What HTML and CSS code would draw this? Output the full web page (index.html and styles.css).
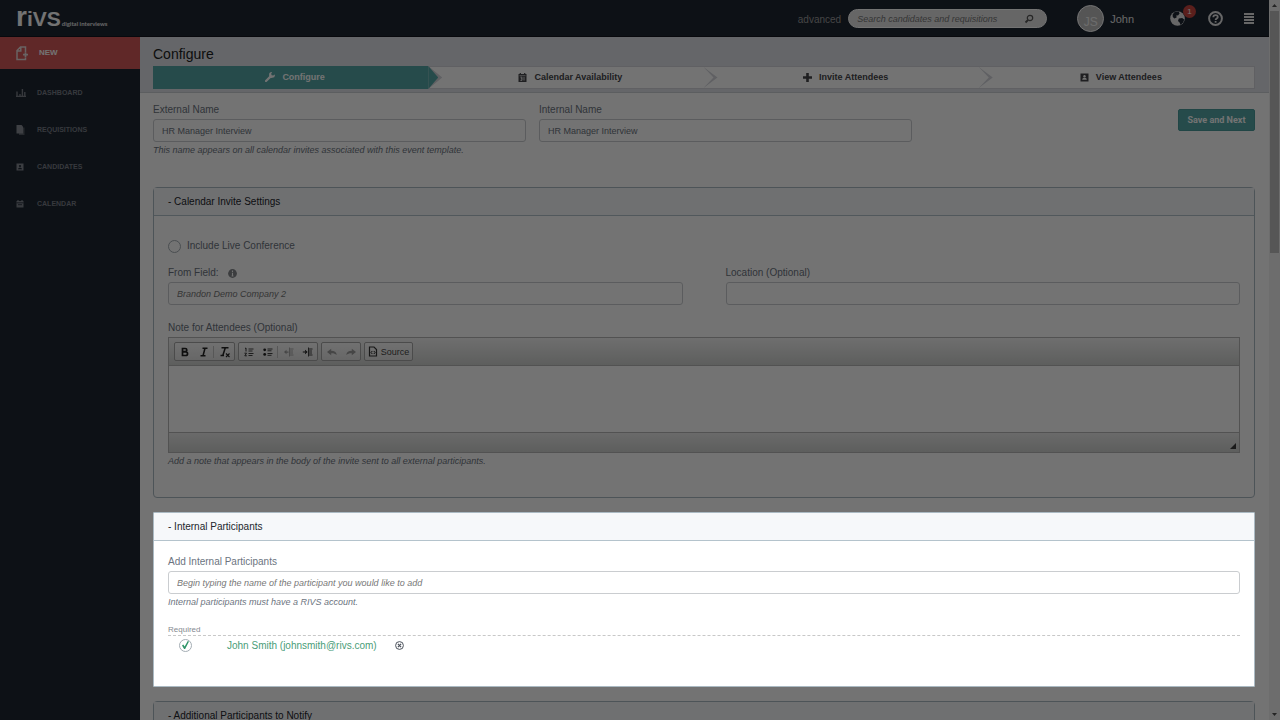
FILE: index.html
```html
<!DOCTYPE html>
<html lang="en">
<head>
    <title>Configure</title>
    <meta charset="UTF-8">
    <link rel="stylesheet" href="styles.css">
</head>
<body>
    <div class="app">
        <!-- Top bar -->
        <header class="topbar">
            <a href="#" class="logo"><span class="logo-r">r</span><span class="logo-name">iVS</span><span class="logo-tag">digital interviews</span></a>
            <form class="search">
                <a href="#" class="advanced">advanced</a>
                <div class="search-box">
                    <input type="text" aria-label="Search" placeholder="Search candidates and requisitions">
                    <svg width="10" height="10" viewBox="0 0 10 10"><circle cx="6" cy="4" r="2.7" fill="none" stroke="#555" stroke-width="1.2"/><path d="M4 6L1.5 8.5" stroke="#555" stroke-width="1.8"/></svg>
                </div>
            </form>
            <a href="#" class="user"><span class="avatar">JS</span>John</a>
            <nav class="top-icons">
                <a href="#" class="globe" aria-label="Notifications">
                    <svg width="15" height="15" viewBox="0 0 15 15"><circle cx="7.5" cy="7.5" r="7.3" fill="#e4e4e4"/><path d="M4.6 1L8.6 .6 9.6 2.6 8 4.6 6.4 4.2 6.6 6.4 4.4 7.6 2.8 6 2.6 3.6zM8.8 7.6L12.2 7 14.2 8.6 13.2 11.6 10.6 14 9.6 11.4 8 10z" fill="#1d2632"/></svg>
                    <span class="badge">1</span>
                </a>
                <a href="#" aria-label="Help">
                    <svg width="15" height="15" viewBox="0 0 15 15"><circle cx="7.5" cy="7.5" r="6.4" fill="none" stroke="#e4e4e4" stroke-width="2"/><path d="M5.3 6.2C5.3 3.4 9.8 3.4 9.8 6 9.8 7.5 7.6 7.5 7.6 9" fill="none" stroke="#e4e4e4" stroke-width="1.8"/><path d="M6.7 10h1.8v1.7H6.7z" fill="#e4e4e4"/></svg>
                </a>
                <a href="#" aria-label="Menu">
                    <svg width="10" height="11" viewBox="0 0 10 11"><path d="M0 1h10M0 4h10M0 7h10M0 10h10" stroke="#e4e4e4" stroke-width="1.8"/></svg>
                </a>
            </nav>
        </header>

        <div class="layout">
            <!-- Side menu -->
            <nav class="sidebar">
                <a href="#" class="new">
                    <svg width="12" height="15" viewBox="0 0 12 15"><path d="M9.5 6V1H4.5L1 4.5V13.6H9.5V11.5M1 5H4.8V1" fill="none" stroke="#e8dcdc" stroke-width="1.5"/><path d="M9.5 6.2v5M7 8.7h5" stroke="#e8dcdc" stroke-width="1.7"/></svg>
                    NEW
                </a>
                <a href="#">
                    <svg width="10" height="8" viewBox="0 0 10 8"><path d="M1 2.5V8M4 5V8M6.4 0V8M8.8 3V8M0 7.5H10" stroke="#7a7f88" stroke-width="1.4"/></svg>
                    DASHBOARD
                </a>
                <a href="#">
                    <svg width="10" height="10" viewBox="0 0 10 10"><path d="M3 2.5h5.5V10H3z" fill="#565b64"/><path d="M.5 0h5L7 1.5V8.5H.5z" fill="#8a8f98"/></svg>
                    REQUISITIONS
                </a>
                <a href="#">
                    <svg width="10" height="8" viewBox="0 0 10 8"><path d="M.5 .5h7v7h-7z" fill="#858a93"/><circle cx="4" cy="3" r="1.1" fill="#1d2632"/><path d="M2 6.2C2 4.2 6 4.2 6 6.2z" fill="#1d2632"/></svg>
                    CANDIDATES
                </a>
                <a href="#">
                    <svg width="10" height="8" viewBox="0 0 10 8"><path d="M.5 1h7v6.5h-7z" fill="#7d828b"/><path d="M.5 2.8h7" stroke="#1d2632" stroke-width=".8"/><path d="M2 0v1.6M6 0v1.6" stroke="#9297a0"/><path d="M2 4.7h4" stroke="#1d2632" stroke-width=".8"/></svg>
                    CALENDAR
                </a>
            </nav>

            <main class="content">
                <div class="page-head">
                    <h1>Configure</h1>
                    <ol class="steps">
                        <li class="step active"><a href="#">
                            <svg width="10" height="10" viewBox="0 0 10 10"><path d="M1 9L5.4 4.6" stroke="#fff" stroke-width="2.2" stroke-linecap="round"/><path d="M9.8 2.4A2.9 2.9 0 1 1 7.2.1L6.2 1.6 6.6 3.2 8.2 3.6z" fill="#fff"/></svg>
                            Configure
                        </a></li>
                        <li class="step"><a href="#">
                            <svg width="9" height="9" viewBox="0 0 9 9"><path d="M.5 1h8v8h-8z" fill="#454549"/><path d="M2.3 0v1.5M6.7 0v1.5" stroke="#454549" stroke-width="1.2"/><path d="M1.5 2.7h6" stroke="#fff" stroke-width=".6"/><path d="M2.4 4.2h1.6v3.2H2.4M2.8 5.8H4M6 3.9v3.6" fill="none" stroke="#fff" stroke-width=".8"/></svg>
                            Calendar Availability
                        </a></li>
                        <li class="step"><a href="#">
                            <svg width="9" height="9" viewBox="0 0 9 9"><path d="M4.5 0v9M0 4.5h9" stroke="#454549" stroke-width="2.6"/></svg>
                            Invite Attendees
                        </a></li>
                        <li class="step"><a href="#">
                            <svg width="9" height="9" viewBox="0 0 9 9"><path d="M.5 .5h8v8h-8z" fill="#454549"/><circle cx="4.5" cy="3.2" r="1.2" fill="#fff"/><path d="M2.2 6.8C2.2 4.2 6.8 4.2 6.8 6.8z" fill="#fff"/></svg>
                            View Attendees
                        </a></li>
                    </ol>
                </div>

                <form class="template-form">
                    <div class="name-row">
                        <div class="field">
                            <label for="externalName">External Name</label>
                            <input type="text" id="externalName" value="HR Manager Interview">
                            <p class="help">This name appears on all calendar invites associated with this event template.</p>
                        </div>
                        <div class="field">
                            <label for="internalName">Internal Name</label>
                            <input type="text" id="internalName" value="HR Manager Interview">
                        </div>
                        <button type="submit" class="btn">Save and Next</button>
                    </div>

                    <!-- Calendar invite settings -->
                    <section class="panel">
                        <h2>- Calendar Invite Settings</h2>
                        <div class="panel-body settings">
                            <label class="check-row"><input type="checkbox" class="round-check">Include Live Conference</label>
                            <div class="two-cols">
                                <div class="field">
                                    <label for="fromField">From Field:
                                        <svg class="info" width="9" height="9" viewBox="0 0 9 9"><circle cx="4.5" cy="4.5" r="4.4" fill="#85888c"/><path d="M4.5 1.6v1.3M4.5 3.7v3.3M3.6 7h1.8" stroke="#fff" stroke-width="1.1"/></svg>
                                    </label>
                                    <input type="text" id="fromField" placeholder="Brandon Demo Company 2">
                                </div>
                                <div class="field">
                                    <label for="location">Location (Optional)</label>
                                    <input type="text" id="location">
                                </div>
                            </div>
                            <div class="field note">
                                <label for="note">Note for Attendees (Optional)</label>
                                <div class="editor">
                                    <div class="toolbar">
                                        <div class="tool-group">
                                            <button type="button" aria-label="Bold"><svg width="12" height="12" viewBox="0 0 12 12"><path d="M3.5 2.5h2.7a1.5 1.5 0 0 1 0 3.2H3.5zM3.5 5.8h3.2a1.8 1.8 0 0 1 0 3.7H3.5z" fill="none" stroke="#222" stroke-width="1.7"/></svg></button>
                                            <button type="button" aria-label="Italic"><svg width="12" height="12" viewBox="0 0 12 12"><path d="M4.5 2.3h5M2.5 9.7h5M7 2.3L5 9.7" stroke="#222" stroke-width="1.5"/></svg></button>
                                            <span class="sep"></span>
                                            <button type="button" aria-label="Remove Format"><svg width="12" height="12" viewBox="0 0 12 12"><path d="M2.5 1.8h7M1.5 9.5h3.5M6.3 1.8L3.8 9.5" stroke="#222" stroke-width="1.5"/><path d="M7 7.5l3.5 3.5M10.5 7.5L7 11" stroke="#222" stroke-width="1.1"/></svg></button>
                                        </div>
                                        <div class="tool-group">
                                            <button type="button" aria-label="Numbered List"><svg width="12" height="12" viewBox="0 0 12 12"><path d="M5.5 3h5M5.5 5h4M5.5 7.5h5M5.5 9.5h4" stroke="#444" stroke-width="1"/><path d="M2 2.5L3 2V5.5M1.5 7.2h2L1.8 9.8h2" fill="none" stroke="#333" stroke-width="1"/></svg></button>
                                            <button type="button" aria-label="Bulleted List"><svg width="12" height="12" viewBox="0 0 12 12"><path d="M5.5 3h5M5.5 4.8h4M5.5 7.5h5M5.5 9.3h4" stroke="#444" stroke-width="1"/><circle cx="2.7" cy="3.8" r="1.4" fill="#222"/><circle cx="2.7" cy="8.4" r="1.4" fill="#222"/></svg></button>
                                            <span class="sep"></span>
                                            <button type="button" aria-label="Decrease Indent" disabled><svg width="12" height="12" viewBox="0 0 12 12"><path d="M6.5 1.5v9M7 3h3.5M7 5h3M7 7h3M7 9h3.5" stroke="#444" stroke-width="1"/><path d="M1 6l2.5-2.2v4.4zM3 5.5h2.5v1.2H3z" fill="#222"/></svg></button>
                                            <button type="button" aria-label="Increase Indent"><svg width="12" height="12" viewBox="0 0 12 12"><path d="M6.5 1.5v9M7 3h3.5M7 5h3M7 7h3M7 9h3.5" stroke="#444" stroke-width="1"/><path d="M5.6 6L3 3.8v4.4zM.8 5.4h2.5v1.2H.8z" fill="#222"/></svg></button>
                                        </div>
                                        <div class="tool-group">
                                            <button type="button" aria-label="Undo" disabled><svg width="12" height="12" viewBox="0 0 12 12"><path d="M1 6l4.2-3.3v2.1C8.5 4.8 10.3 6.2 10.8 9 9 7.4 7.5 7.1 5.2 7.2v2z" fill="#222"/></svg></button>
                                            <button type="button" aria-label="Redo" disabled><svg width="12" height="12" viewBox="0 0 12 12"><path d="M11 6L6.8 2.7v2.1C3.5 4.8 1.7 6.2 1.2 9 3 7.4 4.5 7.1 6.8 7.2v2z" fill="#222"/></svg></button>
                                        </div>
                                        <div class="tool-group">
                                            <button type="button" class="source"><svg width="10" height="11" viewBox="0 0 10 11"><path d="M1.5 1h4.5l2.500 2.500V10h-7z" fill="none" stroke="#333" stroke-width="1.2"/><path d="M4.3 5L3 6.500 4.300 8M5.800 5L7.100 6.500 5.800 8" fill="none" stroke="#222"/></svg>Source</button>
                                        </div>
                                    </div>
                                    <textarea id="note"></textarea>
                                    <div class="editor-foot"><span class="resizer"></span></div>
                                </div>
                                <p class="help">Add a note that appears in the body of the invite sent to all external participants.</p>
                            </div>
                        </div>
                    </section>

                    <!-- Internal participants, shown above the shade -->
                    <section class="panel spotlight">
                        <h2>- Internal Participants</h2>
                        <div class="panel-body participants">
                            <div class="field">
                                <label for="participant">Add Internal Participants</label>
                                <input type="text" id="participant" placeholder="Begin typing the name of the participant you would like to add">
                                <p class="help">Internal participants must have a RIVS account.</p>
                            </div>
                            <div class="required-head">Required</div>
                            <div class="participant">
                                <input type="checkbox" class="round-check" id="req1" aria-label="Required" checked>
                                <label for="req1">John Smith (johnsmith@rivs.com)</label>
                                <button type="button" class="remove" aria-label="Remove">
                                    <svg width="9" height="9" viewBox="0 0 9 9"><circle cx="4.5" cy="4.5" r="3.9" fill="none" stroke="#4c525c" stroke-width="1"/><path d="M2.9 2.9l3.2 3.2M6.1 2.9L2.9 6.1" stroke="#4c525c" stroke-width="1.2"/></svg>
                                </button>
                            </div>
                        </div>
                    </section>

                    <section class="panel">
                        <h2>- Additional Participants to Notify</h2>
                        <div class="panel-body"></div>
                    </section>
                </form>
            </main>
        </div>
    </div>

    <div class="scrollbar">
        <span class="arrow up"></span>
        <span class="thumb"></span>
        <span class="arrow down"></span>
    </div>
    <div class="shade"></div>
</body>
</html>
```
FILE: styles.css
```css
* {
    box-sizing: border-box;
}
body {
    margin: 0;
    display: flex;
    height: 100vh;
    overflow: hidden;
    font-family: "Liberation Sans", Arial, sans-serif;
    font-size: 10px;
    line-height: 16px;
    color: #6c7480;
    background: #fff;
}
a {
    color: inherit;
    text-decoration: none;
}
h1, h2, p, ol {
    margin: 0;
    padding: 0;
    font-weight: normal;
}
button, input, textarea {
    font-family: inherit;
    font-size: 9px;
    color: inherit;
}
svg {
    display: block;
    flex: none;
}
.app {
    flex: 1;
    min-width: 0;
    display: flex;
    flex-direction: column;
}

/* top bar */
.topbar {
    flex: none;
    display: flex;
    align-items: center;
    height: 37px;
    padding: 1px 15px 0 16px;
    background: #1d2632;
    border-bottom: 1px solid #12161e;
    color: #e4e4e4;
}
.logo {
    display: flex;
    align-items: baseline;
    margin-right: auto;
    font-weight: bold;
    color: #fff;
}
.logo-r {
    font-size: 28px;
    line-height: 24px;
}
.logo-name {
    font-size: 21px;
}
.logo-tag {
    margin-left: 1px;
    font-family: Lato, sans-serif;
    font-size: 6px;
    color: #e4e4e4;
}
.search {
    display: flex;
    align-items: center;
    gap: 7px;
    margin-right: 30px;
}
.advanced {
    padding-top: 3px;
    color: #9b9b9b;
}
.search-box {
    display: flex;
    align-items: center;
    width: 199px;
    height: 19px;
    padding: 0 12px 0 8px;
    background: #e2e2e2;
    border: 1px solid #fff;
    border-radius: 10px;
}
.search-box input {
    flex: 1;
    min-width: 0;
    padding: 0;
    border: 0;
    background: none;
}
.user {
    display: flex;
    align-items: center;
    gap: 6px;
    margin-right: 36px;
    font-size: 11px;
}
.avatar {
    width: 27px;
    height: 27px;
    padding-top: 8px;
    border: 1px solid #fff;
    border-radius: 50%;
    background: #bdbdbd;
    color: #f0f0f0;
    font-size: 12px;
    text-align: center;
}
.top-icons {
    display: flex;
    align-items: center;
    gap: 21px;
}
.globe {
    position: relative;
    margin-right: 2px;
}
.badge {
    position: absolute;
    top: -6px;
    left: 13px;
    width: 13px;
    height: 13px;
    border-radius: 50%;
    background: #c9453f;
    color: #fff;
    font-size: 8px;
    line-height: 13px;
    text-align: center;
}

/* side menu */
.layout {
    flex: 1;
    min-height: 0;
    display: flex;
}
.sidebar {
    flex: none;
    width: 140px;
    background: #1d2632;
    color: #7a7f88;
    font-size: 7px;
    font-weight: bold;
}
.sidebar a {
    display: flex;
    align-items: center;
    gap: 11px;
    height: 37px;
    padding-left: 16px;
}
.sidebar .new {
    height: 32px;
    margin-bottom: 5px;
    background: #d55959;
    color: #fff;
    font-size: 8px;
}

/* page head and steps */
.content {
    flex: 1;
    min-width: 0;
}
.page-head {
    height: 56px;
    padding: 9px 14px 0 13px;
    background: #e0e2e9;
    border-bottom: 1px solid #cdd1d6;
}
h1 {
    margin-bottom: 4px;
    font-size: 14px;
    color: #1c1e22;
}
.steps {
    display: flex;
    height: 23px;
    list-style: none;
    border: 1px solid #d4d6dc;
}
.step {
    position: relative;
    flex: 1;
    background: #fff;
    color: #454549;
    font-size: 9px;
    font-weight: bold;
}
.step a {
    display: flex;
    align-items: center;
    justify-content: center;
    gap: 7px;
    height: 100%;
    padding: 0 0 1px 9px;
}
.step::before, .step::after {
    content: "";
    position: absolute;
    z-index: 1;
    top: 0;
    bottom: 0;
    left: 100%;
    clip-path: polygon(0 0, 100% 50%, 0 100%);
}
.step::before {
    width: 14px;
    background: #d4d6dc;
}
.step::after {
    width: 10px;
    background: inherit;
}
.step:last-child::before, .step:last-child::after {
    display: none;
}
.step.active {
    margin: -1px 0 -1px -1px;
    background: #54a7a7;
    color: #fff;
}

/* form */
.template-form {
    padding: 9px 14px 0 13px;
}
.name-row {
    display: grid;
    grid-template-columns: 1fr 1fr 330px;
    gap: 13px;
    margin-bottom: 29px;
}
.field label {
    display: flex;
    align-items: center;
    margin-bottom: 1px;
}
.field input {
    display: block;
    width: 100%;
    height: 23px;
    padding: 0 8px;
    border: 1px solid #cacdd0;
    border-radius: 3px;
    background: #fff;
}
::placeholder {
    color: #777;
    font-style: italic;
    opacity: 1;
}
.help {
    font-size: 9px;
    font-style: italic;
}
.info {
    margin-left: 9px;
}
.btn {
    align-self: start;
    justify-self: end;
    width: 77px;
    height: 22px;
    margin-top: 7px;
    padding: 0;
    border: 1px solid #4a9c9c;
    border-radius: 2px;
    background: #54a7a7;
    color: #fff;
    font-family: Roboto, sans-serif;
    font-weight: bold;
}

/* panels */
.panel {
    margin-bottom: 14px;
    border: 1px solid #abbac3;
    border-radius: 4px;
    background: #fff;
}
.panel h2 {
    height: 28px;
    padding: 6px 14px 0;
    border-bottom: 1px solid #b4c3cc;
    background: #f6f8fa;
    color: #22262c;
    font-size: 10px;
}
.panel-body {
    padding: 0 14px;
}
.settings {
    padding-top: 22px;
    padding-bottom: 28px;
}
.check-row {
    display: flex;
    align-items: center;
    gap: 6px;
    margin-bottom: 11px;
}
.round-check {
    appearance: none;
    flex: none;
    width: 13px;
    height: 13px;
    margin: 0;
    border: 1px solid #a4adb4;
    border-radius: 50%;
    background: #fff;
}
.round-check:checked::before {
    content: "";
    display: block;
    width: 7px;
    height: 8px;
    margin: 1px 2px;
    background: #2f9468;
    clip-path: polygon(0 55%, 18% 45%, 38% 70%, 82% 0, 100% 5%, 45% 100%, 30% 100%);
}
.two-cols {
    display: grid;
    grid-template-columns: 1fr 1fr;
    gap: 43px;
    margin-bottom: 15px;
}

/* note editor */
.editor {
    border: 1px solid #b6b6b6;
}
.toolbar {
    display: flex;
    gap: 3px;
    height: 28px;
    padding: 4px 5px;
    background: linear-gradient(#f5f5f5, #cfd1cf);
    border-bottom: 1px solid #b6b6b6;
}
.tool-group {
    display: flex;
    align-items: center;
    height: 19px;
    border: 1px solid #a6a6a6;
    border-radius: 2px;
    background: linear-gradient(#fafafa, #e4e4e4);
}
.tool-group button {
    display: flex;
    align-items: center;
    justify-content: center;
    width: 19px;
    height: 17px;
    padding: 0;
    border: 0;
    background: none;
}
.tool-group button:disabled {
    opacity: 0.4;
}
.tool-group .source {
    gap: 3px;
    width: 47px;
    color: #474747;
}
.sep {
    width: 2px;
    height: 12px;
    border-left: 1px solid #c0c0c0;
}
.editor textarea {
    display: block;
    width: 100%;
    height: 66px;
    border: 0;
    resize: none;
    background: #fff;
}
.editor-foot {
    display: flex;
    align-items: flex-end;
    justify-content: flex-end;
    height: 20px;
    padding: 3px;
    border-top: 1px solid #b6b6b6;
    background: linear-gradient(#ebebeb, #cfd1cf);
}
.resizer {
    width: 6px;
    height: 6px;
    background: #3a3a3a;
    clip-path: polygon(100% 0, 100% 100%, 0 100%);
}

/* participants */
.spotlight {
    position: relative;
    z-index: 11;
    border-radius: 1px;
}
.participants {
    padding-top: 13px;
    padding-bottom: 31px;
}
.required-head {
    margin-top: 15px;
    border-bottom: 1px dashed #c8c8c8;
    color: #84898f;
    font-size: 8px;
    line-height: 10px;
}
.participant {
    display: flex;
    align-items: center;
    height: 19px;
    padding-left: 11px;
    color: #4a9d78;
}
.participant label {
    margin-left: 35px;
}
.remove {
    margin-left: 18px;
    padding: 0;
    border: 0;
    background: none;
}

/* scrollbar and shade */
.scrollbar {
    flex: none;
    display: flex;
    flex-direction: column;
    align-items: center;
    width: 11px;
    background: #f1f1f1;
}
.arrow {
    width: 5px;
    height: 3px;
    margin: 4px 0;
    background: #505050;
}
.up {
    clip-path: polygon(50% 0, 100% 100%, 0 100%);
}
.down {
    margin-top: auto;
    clip-path: polygon(0 0, 100% 0, 50% 100%);
}
.thumb {
    width: 9px;
    height: calc(34% - 3px);
    background: #bebebe;
}
.shade {
    position: fixed;
    z-index: 10;
    inset: 0;
    background: rgba(0, 0, 0, 0.55);
    pointer-events: none;
}
```
